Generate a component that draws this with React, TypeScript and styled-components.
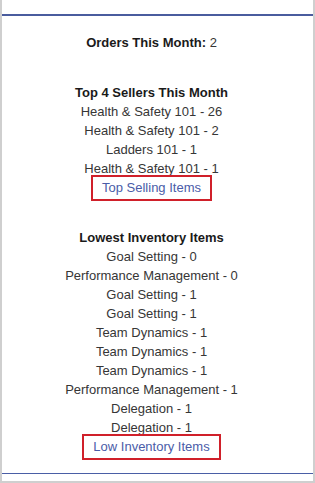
import React from "react";
import styled, { createGlobalStyle } from "styled-components";

const GlobalStyle = createGlobalStyle`
    html, body {
        margin: 0;
        padding: 0;
        background: #ffffff;
    }

    * {
        box-sizing: border-box;
    }
`;

const topSellers = [
    "Health & Safety 101 - 26",
    "Health & Safety 101 - 2",
    "Ladders 101 - 1",
    "Health & Safety 101 - 1",
];

const lowInventory = [
    "Goal Setting - 0",
    "Performance Management - 0",
    "Goal Setting - 1",
    "Goal Setting - 1",
    "Team Dynamics - 1",
    "Team Dynamics - 1",
    "Team Dynamics - 1",
    "Performance Management - 1",
    "Delegation - 1",
    "Delegation - 1",
];

const Dashboard: React.FC = () => {
    return (
        <Panel>
            <GlobalStyle />
            <Widget>
                <Stat>
                    <b>Orders This Month:</b> 2
                </Stat>

                <Section>
                    <Heading>Top 4 Sellers This Month</Heading>
                    {topSellers.map((item, i) => (
                        <Item key={i}>{item}</Item>
                    ))}
                    <Item>
                        <MoreLink href="#">Top Selling Items</MoreLink>
                    </Item>
                </Section>

                <Section>
                    <Heading>Lowest Inventory Items</Heading>
                    {lowInventory.map((item, i) => (
                        <Item key={i}>{item}</Item>
                    ))}
                    <Item>
                        <MoreLink href="#">Low Inventory Items</MoreLink>
                    </Item>
                </Section>
            </Widget>
        </Panel>
    );
};

const Panel = styled.div`
    width: 315px;
    height: 483px;
    padding-top: 14px;
    padding-bottom: 7px;
    border-left: 2px solid #cfcfcf;
    border-right: 2px solid #cfcfcf;
    border-bottom: 2px solid #cfcfcf;
    background: #ffffff;
    display: flex;
    flex-direction: column;
`;

const Widget = styled.div`
    flex: 1;
    border-top: 2px solid #4a5c9e;
    border-bottom: 1px solid #4a5ea6;
    padding: 17px 12px 0 0;

    display: flex;
    flex-direction: column;
    gap: 31px;

    font-family: "Liberation Sans", Arial, sans-serif;
    font-size: 13px;
    line-height: 19px;
    color: #363636;
    text-align: center;
`;

const Stat = styled.p`
    margin: 0;

    b {
        color: #1a1a1a;
    }
`;

const Section = styled.div`
    display: flex;
    flex-direction: column;
`;

const Heading = styled.div`
    font-weight: bold;
    color: #1a1a1a;
`;

const Item = styled.div`
    white-space: nowrap;
`;

const MoreLink = styled.a`
    color: #4a5ca8;
    text-decoration: none;
    padding: 3px 9px 4px;
    border: 2px solid #d0202a;
`;

export default Dashboard;
